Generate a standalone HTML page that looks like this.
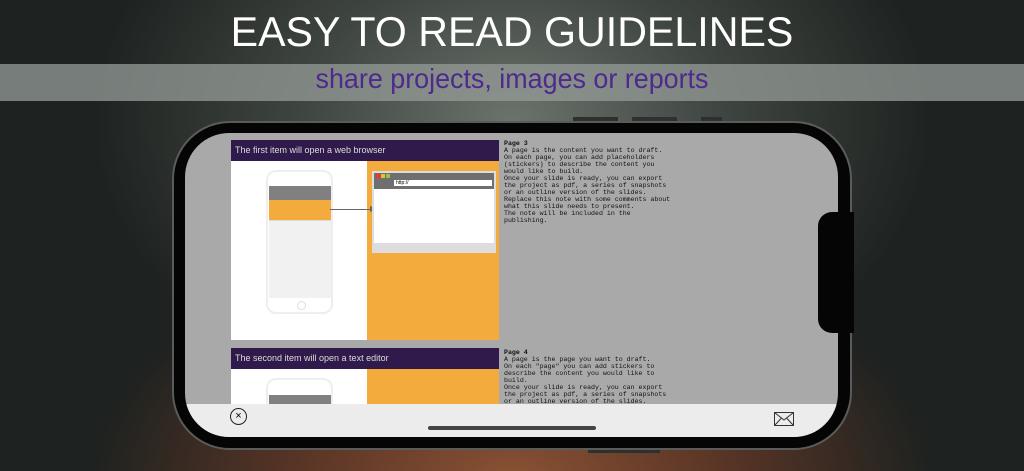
<!DOCTYPE html>
<html><head><style>
*{margin:0;padding:0;box-sizing:border-box}
body{width:1024px;height:471px;overflow:hidden;position:relative;font-family:"Liberation Sans",sans-serif;
background:radial-gradient(ellipse 420px 300px at 512px 120px,#6b736c 0%,#3f4541 50%,#1e2220 100%);}
.bot{position:absolute;left:0;top:230px;width:1024px;height:241px;background:radial-gradient(ellipse 420px 240px at 512px 250px,#8a5234 0%,#5a3526 50%,rgba(30,28,26,0) 100%);}
.title{position:absolute;left:0;width:1024px;top:8px;text-align:center;color:#fff;font-size:42px;transform:scaleX(0.98)}
.band{position:absolute;left:0;top:64px;width:1024px;height:37px;background:rgba(150,156,152,0.75)}
.sub{position:absolute;left:0;width:1024px;top:63px;text-align:center;color:#4d2a8c;font-size:28px;transform:scaleX(0.96)}
.btn{position:absolute;background:#2e302f;height:4px}
.phone{position:absolute;left:172px;top:121px;width:680px;height:329px;border-radius:58px;background:#050505;border:2px solid #5a5c5b}
.screen{position:absolute;left:185px;top:133px;width:653px;height:304px;border-radius:44px;background:#a9a9a9;overflow:hidden}
.notch{position:absolute;left:818px;top:212px;width:36px;height:121px;background:#050505;border-radius:14px 0 0 14px}
.bar{position:absolute;left:0;top:271px;width:653px;height:33px;background:#ececec}
.note{position:absolute;font-family:"Liberation Mono",monospace;font-size:6.6px;line-height:7px;color:#111;white-space:pre}
.hd{position:absolute;background:#2f1a4b;color:#ddd;font-size:9px;padding-left:4px;line-height:21px}
</style></head><body>
<div class="bot"></div>
<div class="title">EASY TO READ GUIDELINES</div>
<div class="band"></div>
<div class="sub">share projects, images or reports</div>
<div class="btn" style="left:573px;top:117px;width:45px"></div>
<div class="btn" style="left:632px;top:117px;width:45px"></div>
<div class="btn" style="left:701px;top:117px;width:21px"></div>
<div class="btn" style="left:588px;top:449px;width:72px"></div>
<div class="phone"></div>
<div class="screen">
 <div class="hd" style="left:46px;top:7px;width:268px;height:21px">The first item will open a web browser</div>
 <div style="position:absolute;left:46px;top:28px;width:136px;height:179px;background:#fff"></div>
 <div style="position:absolute;left:182px;top:28px;width:132px;height:179px;background:#f2ab3c"></div>
 <div style="position:absolute;left:81px;top:37px;width:67px;height:144px;border:2px solid #eee;border-radius:10px;background:#fff"></div>
 <div style="position:absolute;left:84px;top:53px;width:62px;height:14px;background:#808080"></div>
 <div style="position:absolute;left:84px;top:67px;width:62px;height:20px;background:#f2ab3c"></div>
 <div style="position:absolute;left:84px;top:87px;width:62px;height:78px;background:#f1f1f1;border-top:1px solid #ddd"></div>
 <div style="position:absolute;left:112px;top:168px;width:9px;height:9px;border:1px solid #ddd;border-radius:50%"></div>
 <div style="position:absolute;left:145px;top:76px;width:44px;height:1px;background:#666"></div>
 <div style="position:absolute;left:185px;top:73px;border-left:7px solid #666;border-top:3px solid transparent;border-bottom:3px solid transparent"></div>
 <div style="position:absolute;left:187px;top:38px;width:124px;height:82px;background:#fff;border:2px solid #ddd"></div>
 <div style="position:absolute;left:189px;top:40px;width:120px;height:16px;background:#6f6f6f"></div>
 <div style="position:absolute;left:191px;top:41px;width:4px;height:4px;background:#e33"></div>
 <div style="position:absolute;left:196px;top:41px;width:4px;height:4px;background:#eb3"></div>
 <div style="position:absolute;left:201px;top:41px;width:4px;height:4px;background:#8c4"></div>
 <div style="position:absolute;left:209px;top:47px;width:98px;height:6px;background:#fff;font-size:5px;line-height:6px;padding-left:2px">http://</div>
 <div style="position:absolute;left:189px;top:110px;width:120px;height:8px;background:#ddd"></div>
 <div class="note" style="left:319px;top:7px"><b>Page 3</b>
A page is the content you want to draft.
On each page, you can add placeholders
(stickers) to describe the content you
would like to build.
Once your slide is ready, you can export
the project as pdf, a series of snapshots
or an outline version of the slides.
Replace this note with some comments about
what this slide needs to present.
The note will be included in the
publishing.</div>
 <div class="hd" style="left:46px;top:215px;width:268px;height:21px">The second item will open a text editor</div>
 <div style="position:absolute;left:46px;top:236px;width:136px;height:40px;background:#fff"></div>
 <div style="position:absolute;left:182px;top:236px;width:132px;height:40px;background:#f2ab3c"></div>
 <div style="position:absolute;left:81px;top:245px;width:67px;height:40px;border:2px solid #eee;border-radius:10px"></div>
 <div style="position:absolute;left:84px;top:262px;width:62px;height:14px;background:#808080"></div>
 <div class="note" style="left:319px;top:216px"><b>Page 4</b>
A page is the page you want to draft.
On each "page" you can add stickers to
describe the content you would like to
build.
Once your slide is ready, you can export
the project as pdf, a series of snapshots
or an outline version of the slides.</div>
 <div class="bar">
  <div style="position:absolute;left:45px;top:4px;width:17px;height:17px;border:1px solid #222;border-radius:50%;text-align:center;font-size:11px;line-height:15px">×</div>
  <svg style="position:absolute;left:589px;top:8px" width="20" height="14" viewBox="0 0 20 14"><rect x="0.5" y="0.5" width="19" height="13" fill="none" stroke="#333"/><path d="M0.5 0.5L10 8L19.5 0.5M0.5 13.5L7.5 6M19.5 13.5L12.5 6" fill="none" stroke="#333"/></svg>
  <div style="position:absolute;left:243px;top:22px;width:168px;height:4px;border-radius:2px;background:#444"></div>
 </div>
</div>
<div class="notch"></div>
</body></html>
